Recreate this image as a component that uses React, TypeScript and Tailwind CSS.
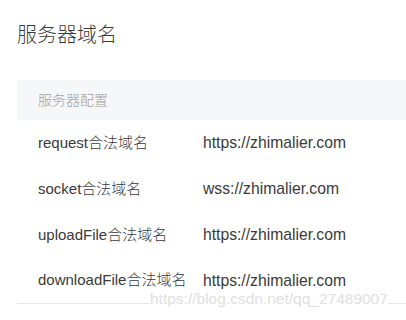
import React from 'react';

type Domain = {
  label: string;
  value: string;
};

const domains: Domain[] = [
  { label: 'request合法域名', value: 'https://zhimalier.com' },
  { label: 'socket合法域名', value: 'wss://zhimalier.com' },
  { label: 'uploadFile合法域名', value: 'https://zhimalier.com' },
  { label: 'downloadFile合法域名', value: 'https://zhimalier.com' },
];

const App = () => {
  return (
    <div
      className="relative w-[406px] h-[320px] overflow-hidden bg-white pl-[17px] font-light"
      style={{ fontFamily: '"Liberation Sans", "Noto Sans CJK SC", sans-serif' }}
    >
      <h1 className="pt-[21px] text-[20px] leading-[28px] text-[#3a3a3a] font-light">服务器域名</h1>

      <div className="mt-[31px]">
        {/* header */}
        <div className="h-[40px] bg-[#f6f7f9] pl-[21px] flex items-center text-[14px] text-[#a0a0a0]">
          服务器配置
        </div>

        {/* rows */}
        {domains.map((d, i) => (
          <div
            key={d.label}
            className={`h-[46px] pl-[21px] grid grid-cols-[165px_1fr] items-center text-[#3a3a3a] ${
              i === domains.length - 1 ? 'border-b border-[#e5e5e5]' : ''
            }`}
          >
            <span className="text-[15px]">{d.label}</span>
            <span className="text-[15.7px]">{d.value}</span>
          </div>
        ))}
      </div>

      {/* watermark */}
      <span
        className="absolute left-[150px] top-[289px] text-[15.5px] leading-[20px] text-[#e0e0e0] bg-white"
        style={{ textShadow: '0 0 2px #fff' }}
      >
        https://blog.csdn.net/qq_27489007
      </span>
    </div>
  );
};

export default App;
